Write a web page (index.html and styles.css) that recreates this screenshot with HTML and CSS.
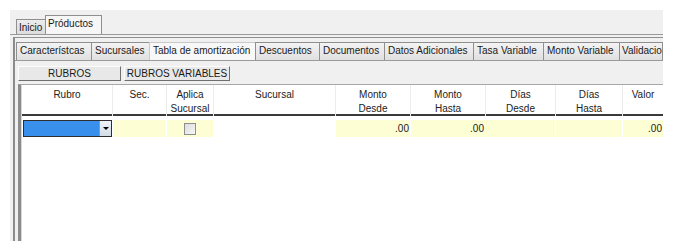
FILE: index.html
```html
<!DOCTYPE html>
<html lang="es">
<head>
  <meta charset="UTF-8">
  <title>Productos - Tabla de amortización</title>
  <link rel="stylesheet" href="styles.css">
</head>
<body>
  <div class="frame">
    <!-- Pestañas principales -->
    <div class="top-tabs">
      <div class="top-tab tab-inicio">Inicio</div>
      <div class="top-tab tab-productos active">Próductos</div>
    </div>

    <div class="page">
      <!-- Pestañas del producto -->
      <div class="sub-tabs">
        <div class="sub-tab w-caract">Característcas</div>
        <div class="sub-tab w-sucursales">Sucursales</div>
        <div class="sub-tab w-tabla active">Tabla de amortización</div>
        <div class="sub-tab w-descuentos">Descuentos</div>
        <div class="sub-tab w-documentos">Documentos</div>
        <div class="sub-tab w-datos">Datos Adicionales</div>
        <div class="sub-tab w-tasa">Tasa Variable</div>
        <div class="sub-tab w-monto">Monto Variable</div>
        <div class="sub-tab w-valid">Validacio</div>
      </div>

      <!-- Botones -->
      <div class="toolbar">
        <button class="btn btn-rubros">RUBROS</button>
        <button class="btn btn-variables">RUBROS VARIABLES</button>
      </div>

      <!-- Grilla -->
      <div class="grid">
        <div class="grid-header">
          <div class="hcell">Rubro</div>
          <div class="hcell">Sec.</div>
          <div class="hcell">Aplica<br>Sucursal</div>
          <div class="hcell">Sucursal</div>
          <div class="hcell">Monto<br>Desde</div>
          <div class="hcell">Monto<br>Hasta</div>
          <div class="hcell">Días<br>Desde</div>
          <div class="hcell">Días<br>Hasta</div>
          <div class="hcell">Valor</div>
        </div>
        <div class="grid-row">
          <div class="cell cell-combo">
            <div class="combo">
              <div class="combo-value"></div>
              <div class="combo-btn"><span class="arrow"></span></div>
            </div>
          </div>
          <div class="cell yellow"></div>
          <div class="cell yellow center"><span class="check"></span></div>
          <div class="cell"></div>
          <div class="cell yellow num">.00</div>
          <div class="cell yellow num">.00</div>
          <div class="cell yellow"></div>
          <div class="cell yellow"></div>
          <div class="cell yellow num">.00</div>
        </div>
      </div>
    </div>
  </div>
</body>
</html>
```

FILE: styles.css
```css
/* Estilos generales */
body {
  margin: 0;
  background: #fff;
  font-family: "Liberation Sans", Arial, sans-serif;
  font-size: 10px;
  color: #1a1a1a;
}
.frame {
  margin: 10px 0 0 10px;
  width: 653px;
  height: 231px;
  background: #f0f0f0;
  overflow: hidden;
  display: flex;
  flex-direction: column;
}

/* Pestañas principales */
.top-tabs {
  display: flex;
  align-items: flex-end;
  height: 24px;
  padding-left: 6px;
  border-bottom: 1px solid #9a9a9a;
  flex: none;
}
.top-tab {
  box-sizing: border-box;
  border: 1px solid #8f8f8f;
  border-bottom: none;
  padding: 0 2px;
  line-height: 14px;
  background: linear-gradient(#ececec, #dcdcdc);
}
.tab-inicio {
  width: 30px;
  height: 15px;
  padding-top: 1px;
}
.tab-productos {
  width: 57px;
  height: 19px;
  margin-left: -1px;
  background: #f6f6f6;
  padding-top: 1px;
}

/* Panel del producto */
.page {
  flex: 1;
  display: flex;
  flex-direction: column;
  margin: 2px 0 0 3px;
  border-top: 1px solid #8f8f8f;
  border-left: 2px solid #8c8c8c;
  min-height: 0;
}
.sub-tabs {
  display: flex;
  margin-top: 4px;
  padding-left: 1px;
  border-bottom: 1px solid #9a9a9a;
  flex: none;
}
.sub-tab {
  box-sizing: border-box;
  flex: none;
  height: 18px;
  line-height: 16px;
  padding-left: 3px;
  margin-right: -1px;
  border: 1px solid #8f8f8f;
  border-bottom: none;
  background: linear-gradient(#f3f3f3, #e0e0e0);
  white-space: nowrap;
  overflow: hidden;
}
.sub-tab.active {
  background: #f8f8f8;
  border-color: #c9c9c9;
}
.w-caract { width: 76px; }
.w-sucursales { width: 59px; }
.w-tabla { width: 107px; }
.w-descuentos { width: 65px; }
.w-documentos { width: 66px; }
.w-datos { width: 90px; }
.w-tasa { width: 71px; }
.w-monto { width: 77px; }
.w-valid { width: 44px; padding-left: 2px; }

/* Botones */
.toolbar {
  display: flex;
  padding: 5px 0 3px 3px;
  gap: 3px;
  flex: none;
}
.btn {
  box-sizing: border-box;
  height: 15px;
  padding: 0;
  font: inherit;
  color: #1a1a1a;
  line-height: 13px;
  background: #e8e8e8;
  border: 1px solid;
  border-color: #fdfdfd #6f6f6f #6f6f6f #fdfdfd;
  text-align: center;
}
.btn-rubros { width: 103px; }
.btn-variables { width: 106px; }

/* Grilla */
.grid {
  flex: 1;
  margin-left: 3px;
  background: #fff;
  border-top: 1px solid #a8a8a8;
  border-left: 3px solid #8c8c8c;
  box-shadow: inset 1px 0 0 #d8d8d8;
  padding-left: 1px;
  min-height: 0;
}
.grid-header,
.grid-row {
  display: grid;
  grid-template-columns: 91px 54px 47px 122px 75px 75px 70px 67px 41px;
}
.hcell {
  height: 26px;
  padding-top: 3px;
  line-height: 14px;
  text-align: center;
  border-bottom: 2px solid #3a3a3a;
  margin-right: 1px;
  box-shadow: 1px 0 0 #ececec;
  color: #222;
}
.grid-row {
  margin-top: 4px;
  height: 17px;
}
.cell {
  margin-right: 1px;
  line-height: 17px;
}
.cell.yellow {
  background: #fefed4;
}
.cell.num {
  text-align: right;
  padding-right: 1px;
}
.cell.center {
  display: flex;
  justify-content: center;
  align-items: center;
}
.cell-combo {
  padding-left: 1px;
}
.combo {
  box-sizing: border-box;
  display: flex;
  height: 17px;
  border: 1px solid #2e2e2e;
}
.combo-value {
  flex: 1;
  background: #3990ec;
}
.combo-btn {
  width: 11px;
  background: linear-gradient(#eef3f8, #d3dce6);
  border-left: 1px solid #8c9aa8;
  display: flex;
  align-items: center;
  justify-content: center;
}
.arrow {
  width: 0;
  height: 0;
  border-left: 3px solid transparent;
  border-right: 3px solid transparent;
  border-top: 3px solid #000;
}
.check {
  box-sizing: border-box;
  width: 12px;
  height: 12px;
  border: 1px solid #8e8f8f;
  background: linear-gradient(135deg, #dcdcdc, #f7f7f7);
}
```
